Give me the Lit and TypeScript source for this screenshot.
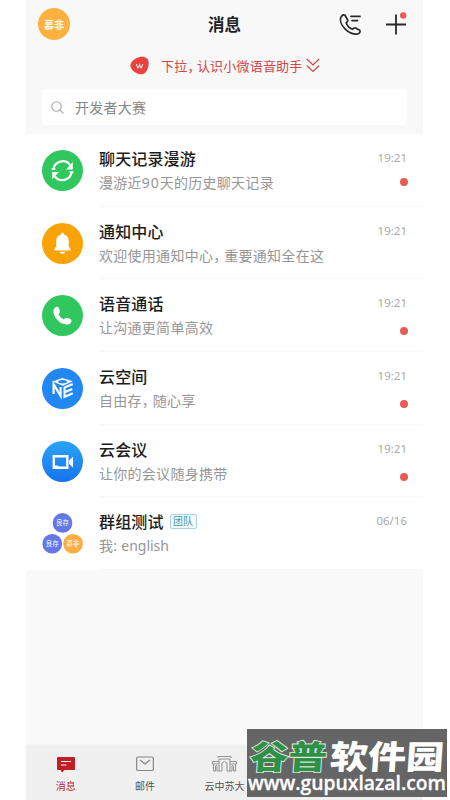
import { LitElement, html, css, svg, nothing } from "lit";
import { customElement } from "lit/decorators.js";

const comma = html`<span class="comma">，</span>`;

const sync = svg`<svg class="avatar" viewBox="0 0 40 40"><circle cx="20" cy="20" r="20" fill="#30c85e"/>
<g fill="none" stroke="#fff" stroke-width="2.200"><path d="M11.200 18.800a9 9 0 0 1 16.200-4.100"/><path d="M28.800 21.600a9 9 0 0 1-16.200 4.100"/></g>
<path d="M30 11.800v7.200h-6.500zM10 28.600v-7.200h6.500zM9.400 17.800h3.600v1.800H9.400zM27 20.800h3.600v1.800H27z" fill="#fff"/></svg>`;
const bell = svg`<svg class="avatar" viewBox="0 0 40 40"><circle cx="20" cy="20" r="20" fill="#faa305"/>
<path d="M20 9.600c1 0 1.600.6 1.600 1.700 3 .8 4.500 3.200 4.500 6.300v5.400l1.900 2.600v1.200H12v-1.200l1.900-2.600v-5.400c0-3.100 1.500-5.500 4.500-6.300 0-1.100.6-1.700 1.600-1.700zM17.200 28h5.600c-.4 2.600-5.200 2.600-5.600 0z" fill="#fff"/></svg>`;
const call = svg`<svg class="avatar" viewBox="0 0 40 40"><circle cx="20" cy="20" r="20" fill="#30c85e"/>
<path d="M12.200 12.900c1.800-2 3.700-1.700 4.500.2l.8 2.500c.4 1.500-.8 2-1.400 3 .9 2.400 3 4.400 5.300 5.300 1-1 1.700-2.200 3.200-1.700l3 1.300c1.700.8 1.500 2.800.2 4-1.500 1.400-3.800 1.800-6.300.9-4.700-1.500-8.400-5.300-10-9.700-.8-2.300-.6-4.300.7-5.800z" fill="#fff"/></svg>`;
const cube = svg`<svg class="avatar" viewBox="0 0 40 40"><circle cx="20" cy="20" r="20" fill="#2187f5"/>
<path d="M10.300 13.200L19.800 9.800l10.200 3.200-9.600 4.300z" fill="#fff"/><ellipse cx="20.100" cy="13.400" rx="4.300" ry="1.600" fill="#2187f5"/>
<path d="M11.300 25.400V15.800l6.800 11.400v-8.600M30 15.600l-8 3.400v9.200l8-3.500M22 23.600l7.500-3.200" fill="none" stroke="#fff" stroke-width="2.100"/></svg>`;
const video = svg`<svg class="avatar" viewBox="0 0 40 40"><defs><linearGradient id="sky" x2="0" y2="1"><stop stop-color="#2aa4fb"/><stop offset="1" stop-color="#1673ed"/></linearGradient></defs>
<circle cx="20" cy="20" r="20" fill="url(#sky)"/><path d="M11.500 14.900h13.200v11.200H11.500z" fill="none" stroke="#fff" stroke-width="2.300"/>
<path d="M26.500 18.700l3.800-3.300v10.400l-3.800-3.300z" fill="#fff"/><path d="M12.500 25.800v-2h2.500l2.500 2z" fill="#fff"/></svg>`;
const group = svg`<svg class="avatar group" viewBox="0 0 40 40"><circle cx="20" cy="9.700" r="9.600" fill="#6377e5"/><circle cx="10" cy="30" r="9.600" fill="#6377e5"/><circle cx="30.300" cy="30" r="9.600" fill="#f9ae42"/>
<g fill="#fff" font-size="6.300" text-anchor="middle"><text x="20" y="12">良存</text><text x="10" y="32.300">良存</text><text x="30.300" y="32.300">慕非</text></g></svg>`;

const rows = [
  { icon: sync, title: "聊天记录漫游", sub: html`漫游近<span class="num">90</span>天的历史聊天记录`, time: "19:21", dot: "near" },
  { icon: bell, title: "通知中心", sub: html`欢迎使用通知中心${comma}重要通知全在这`, time: "19:21", dot: "" },
  { icon: call, title: "语音通话", sub: "让沟通更简单高效", time: "19:21", dot: "far" },
  { icon: cube, title: "云空间", sub: html`自由存${comma}随心享`, time: "19:21", dot: "far" },
  { icon: video, title: "云会议", sub: "让你的会议随身携带", time: "19:21", dot: "far" },
  { icon: group, title: "群组测试", sub: html`我: <span class="latin">english</span>`, time: "06/16", dot: "", tag: "团队" },
];

@customElement("app-root")
export class AppRoot extends LitElement {
  static styles = css`
    :host { display: block; position: relative; width: 450px; height: 800px; overflow: hidden; background: #fff; font-family: "Noto Sans", "Noto Sans CJK SC", sans-serif; }
    * { box-sizing: border-box; }
    svg { display: block; flex: none; }
    .phone { width: 397px; height: 800px; margin-left: 26px; background: #f9f9f9; display: flex; flex-direction: column; }
    .header { height: 134px; flex: none; background: #f8f8f8; }
    .top { height: 48px; display: grid; grid-template-columns: 1fr auto 1fr; align-items: center; padding: 0 16px 0 12px; }
    .me { width: 32px; height: 32px; border-radius: 50%; background: #fdb140; color: #fff; font-size: 10px; font-weight: 700; display: flex; align-items: center; justify-content: center; }
    .heading { margin-left: 4px; padding-top: 1px; font-size: 16.500px; font-weight: 700; line-height: 24px; color: #222; }
    .actions { display: flex; justify-content: flex-end; align-items: center; gap: 23px; }
    .tip { height: 35px; display: flex; align-items: center; padding-left: 104px; color: #d44548; font-size: 13px; letter-spacing: 0.200px; white-space: nowrap; }
    .tip span { margin-left: 12px; }
    .tip .comma { margin-left: 0; letter-spacing: 3px; }
    .tip .more { margin-left: 3px; }
    .comma { font-feature-settings: "halt"; letter-spacing: 4px; }
    .search { margin: 6px 16px 0; height: 36px; border-radius: 4px; background: #fff; display: flex; align-items: center; gap: 11px; padding-left: 9px; font-size: 14px; letter-spacing: 0.250px; color: #868686; }
    .list { flex: none; background: #fff; }
    .row { height: 72.700px; display: flex; padding-left: 16px; }
    .avatar { width: 41px; height: 41px; margin-top: 16px; }
    .body { flex: 1; margin-left: 16px; padding-right: 16px; border-bottom: 1px solid #f8f8f8; display: flex; justify-content: space-between; }
    .title { display: flex; align-items: center; height: 24px; margin-top: 12px; font-size: 16px; letter-spacing: 0.150px; font-weight: 500; color: #1d1d1d; white-space: nowrap; }
    .sub { height: 24px; line-height: 24px; margin-top: 1px; font-size: 14px; letter-spacing: 0.280px; color: #969696; white-space: nowrap; }
    .num { letter-spacing: 0.900px; }
    .latin { letter-spacing: 0; }
    .tag { margin-left: 6px; width: 27px; height: 15px; border: 1px solid #a9d1e2; border-radius: 2px; background: #f5fbfd; color: #4096ba; font-size: 10px; line-height: 13px; text-align: center; font-weight: 400; letter-spacing: 0; }
    .meta { display: flex; flex-direction: column; align-items: flex-end; font-size: 11.500px; letter-spacing: 0; line-height: 16px; color: #aaa; padding-top: 16px; }
    .dot { width: 8px; height: 8px; border-radius: 50%; background: #e65b56; }
    .near { margin-top: 12px; margin-right: -1px; }
    .far { margin-top: 16px; margin-right: -1px; }
    .tabs { margin-top: auto; height: 56px; flex: none; display: grid; grid-template-columns: repeat(5, 1fr); background: #f0f0f0; border-top: 1px solid #f4f4f4; }
    .tab { display: flex; flex-direction: column; align-items: center; font-size: 10px; line-height: 14px; color: #555; white-space: nowrap; }
    .tab svg { margin: 9px 0 4px; }
    .active { color: #bd272d; }
    .stamp { position: absolute; left: 247px; top: 729px; width: 200px; height: 68px; background: #656565; }
  `;

  render() {
    return html`<div class="phone">
        <div class="header">
          <div class="top">
            <div class="me">慕非</div>
            <div class="heading">消息</div>
            <div class="actions">
              <svg width="23" height="23" viewBox="0 0 23 23" fill="none" stroke="#292929" stroke-width="1.700" stroke-linecap="round" stroke-linejoin="round">
                <path d="M5.800 2C4.500 1.500 2.900 2.300 2.100 3.800.3 7.200 2.600 12.300 6 15.900c3.400 3.600 8.800 5.900 12.500 5.100 1.900-.4 2.900-1.900 2.500-3l-.3-.7-4.100-2.300c-1.300-.6-2.300.3-3.100 1.300-2.900-1-5.500-3.800-6.300-6.500C8.400 9 9.100 8.300 8.700 7z M12 3.400h9M13 7.600h5.500" />
              </svg>
              <svg width="22" height="24" viewBox="0 0 22 24"><path d="M1 12.500h20M11 2.500v20" stroke="#292929" stroke-width="1.800" /><circle cx="18.200" cy="3.500" r="3.200" fill="#f05b58" /></svg>
            </div>
          </div>
          <div class="tip">
            <svg width="19" height="20" viewBox="0 0 19 20"><path d="M9 1.200c5-1.300 9.300 1 9.600 4.600.4 5.200-1.900 11.800-6.300 12.500C7.200 19 1 14.300.4 10 0 6.300 4 2.300 9 1.200z" fill="#e9423f" /><path d="M6.300 8l1.600 4.200L9.600 9l1.600 3.200L12.700 8M9.600 9V7.500" fill="none" stroke="#fff" stroke-width="1" /></svg>
            <span>下拉<span class="comma">，</span>认识小微语音助手</span>
            <svg class="more" width="14" height="15" viewBox="0 0 14 15" fill="none" stroke="#c84a4b" stroke-width="1.200"><path d="M.8 1L7 7l6.200-6M.8 7.500l6.200 6 6.200-6" /></svg>
          </div>
          <div class="search">
            <svg width="13" height="13" viewBox="0 0 13 13" fill="none" stroke="#aaa" stroke-width="1.100"><circle cx="5.500" cy="5.500" r="4.700" /><path d="M9 9l3.500 3.500" /></svg>
            <span>开发者大赛</span>
          </div>
        </div>
        <div class="list">
          ${rows.map((r) => html`<div class="row">${r.icon}
              <div class="body">
                <div>
                  <div class="title">${r.title}${r.tag ? html`<span class="tag">${r.tag}</span>` : nothing}</div>
                  <div class="sub">${r.sub}</div>
                </div>
                <div class="meta"><span>${r.time}</span>${r.dot ? html`<i class="dot ${r.dot}"></i>` : nothing}</div>
              </div>
            </div>`)}
        </div>
        <div class="tabs">
          <div class="tab active">
            <svg width="18" height="21" viewBox="0 0 18 21"><path d="M1 3h16q1 0 1 1v11q0 1-1 1H7.500L5 18.500 3.500 16H1Q0 16 0 15V4Q0 3 1 3z" fill="#be1f26" /><path d="M4 7.500h10M4 11h5.500" stroke="#fff" stroke-width="1.200" /></svg>
            消息
          </div>
          <div class="tab">
            <svg width="18" height="21" viewBox="0 0 18 21" fill="none" stroke="#858585" stroke-width="1.200"><rect x=".7" y="3" width="16.600" height="13.500" rx="1.300" /><path d="M4 6l5 4 5-4" /></svg>
            邮件
          </div>
          <div class="tab">
            <svg width="25" height="21" viewBox="0 0 25 21" fill="none" stroke="#929292" stroke-width="1"><path d="M6 4V2.500h13V4M7 5h11M7 5v12h3V9q2.500-3 5 0v8h3V5M7 7.500H.5V10h6M1.500 10v7h2v-5q1.500-1 1.500 0v5H7M18 7.500h6.500V10h-6M23.500 10v7h-2v-5q-1.500-1-1.500 0v5h-2" /></svg>
            云中苏大
          </div>
        </div>
      </div>
      <svg class="stamp" viewBox="0 0 200 68">
        <g font-family="Noto Sans CJK SC, sans-serif" font-size="33" font-weight="900" transform="skewX(-4)">
          <text x="5" y="40" textLength="77" lengthAdjust="spacingAndGlyphs" fill="#2f9147" stroke="#e5f1e7" stroke-width="1.600" paint-order="stroke">谷普</text>
          <text x="85" y="40" textLength="114" lengthAdjust="spacingAndGlyphs" fill="#fff">软件园</text>
        </g>
        <text x="1" y="61" font-family="Open Sans, sans-serif" font-size="19" font-weight="600" textLength="198" lengthAdjust="spacingAndGlyphs" fill="#fff" stroke="#fff" stroke-width=".3">www.gupuxlazal.com</text>
      </svg>`;
  }
}
